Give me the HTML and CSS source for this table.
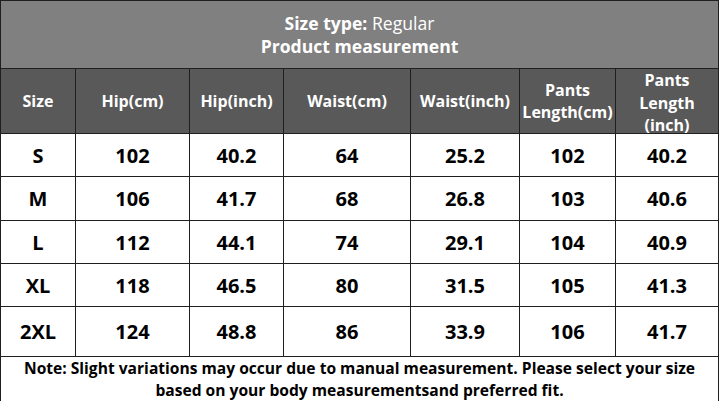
FILE: index.html
```html
<!DOCTYPE html>
<html>
<head>
<meta charset="utf-8">
<link rel="stylesheet" href="styles.css">
</head>
<body>
<table class="chart">
  <colgroup>
    <col class="c1"><col class="c2"><col class="c3"><col class="c4"><col class="c5"><col class="c6"><col class="c7">
  </colgroup>
  <tr class="title-row">
    <td colspan="7" class="title">
      <div><b>Size type:</b> Regular</div>
      <div><b>Product measurement</b></div>
    </td>
  </tr>
  <tr class="head-row">
    <th>Size</th><th>Hip(cm)</th><th>Hip(inch)</th><th>Waist(cm)</th><th>Waist(inch)</th><th>Pants<br>Length(cm)</th><th><div class="tall">Pants<br>Length<br>(inch)</div></th>
  </tr>
  <tr class="r43"><td>S</td><td>102</td><td>40.2</td><td>64</td><td>25.2</td><td>102</td><td>40.2</td></tr>
  <tr class="r44"><td>M</td><td>106</td><td>41.7</td><td>68</td><td>26.8</td><td>103</td><td>40.6</td></tr>
  <tr class="r43"><td>L</td><td>112</td><td>44.1</td><td>74</td><td>29.1</td><td>104</td><td>40.9</td></tr>
  <tr class="r43"><td>XL</td><td>118</td><td>46.5</td><td>80</td><td>31.5</td><td>105</td><td>41.3</td></tr>
  <tr class="r50"><td>2XL</td><td>124</td><td>48.8</td><td>86</td><td>33.9</td><td>106</td><td>41.7</td></tr>
  <tr class="note-row">
    <td colspan="7" class="note">Note: Slight variations may occur due to manual measurement. Please select your size<br>based on your body measurementsand preferred fit.</td>
  </tr>
</table>
</body>
</html>
```
FILE: styles.css
```css
html, body {
  margin: 0;
  padding: 0;
  background: #ffffff;
}
.chart {
  border-collapse: collapse;
  table-layout: fixed;
  width: 718px;
  font-family: "Open Sans", "Noto Sans", sans-serif;
  border: 1px solid #262626;
}
.c1 { width: 75px; }
.c2 { width: 114px; }
.c3 { width: 94px; }
.c4 { width: 127px; }
.c5 { width: 109px; }
.c6 { width: 96px; }
.c7 { width: 103px; }
.chart td, .chart th {
  border: 1px solid #1f1f1f;
  padding: 0;
  text-align: center;
  vertical-align: middle;
}
.title-row { height: 68px; }
.title {
  background: #808080;
  color: #ffffff;
  font-size: 17.6px;
  line-height: 23px;
  font-weight: 400;
  padding-bottom: 3px;
}
.title b { font-weight: 700; }
.head-row { height: 65px; }
.head-row th {
  background: #595959;
  color: #ffffff;
  font-size: 16px;
  line-height: 22px;
  font-weight: 700;
}
.tall {
  height: 60px;
  margin-top: -4px;
  line-height: 22.5px;
}
.r43 { height: 43px; }
.r44 { height: 44px; }
.r50 { height: 50px; }
.r43 td, .r44 td, .r50 td {
  font-size: 20px;
  font-weight: 700;
  color: #000000;
}
.note-row { height: 44px; }
.note {
  font-size: 15.6px;
  line-height: 22px;
  font-weight: 700;
  color: #000000;
}
```
